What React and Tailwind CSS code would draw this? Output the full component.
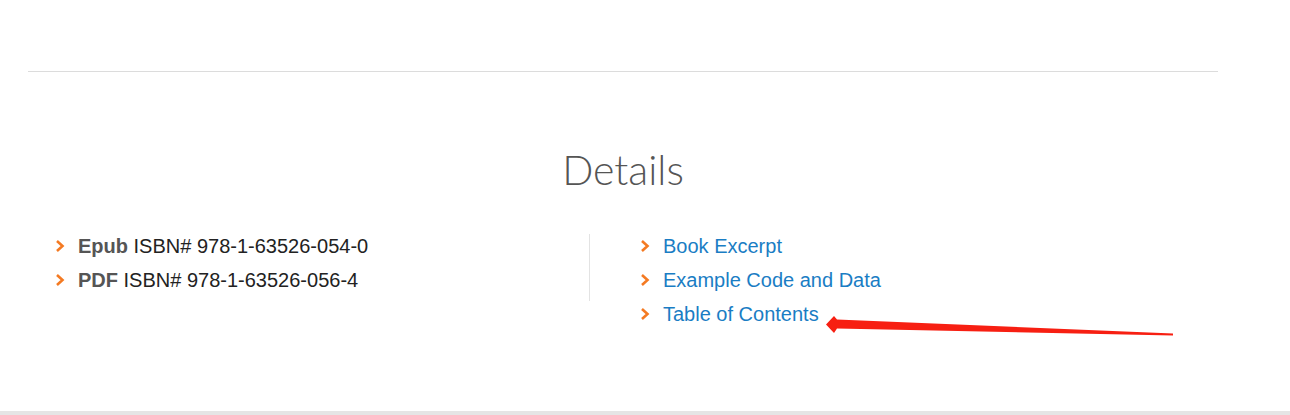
import React from "react";

const Chevron = () => (
  <svg viewBox="0 0 10 14" className="w-[10px] h-[14px] shrink-0">
    <polyline points="2,2 7.5,7 2,12" fill="none" stroke="#f47a22" strokeWidth="2.6" strokeLinejoin="miter" />
  </svg>
);

const isbns = [
  { tipo: "Epub", numero: "978-1-63526-054-0" },
  { tipo: "PDF", numero: "978-1-63526-056-4" },
];

const links = ["Book Excerpt", "Example Code and Data", "Table of Contents"];

export default function App() {
  return (
    <div className="relative h-[415px] w-full bg-white flex flex-col font-['Liberation_Sans',Arial,sans-serif]">
      <div className="mt-[71px] ml-[28px] w-[1190px] border-t border-[#dcdcdc]" />

      <h2 className="mt-[74px] ml-[28px] w-[1190px] text-center text-[41px] leading-[48px] font-light text-[#555] font-['Lato',sans-serif]">
        Details
      </h2>

      <div className="mt-[35px] ml-[28px] flex items-start">
        <ul className="w-[561px] pl-[27px]">
          {isbns.map((item) => (
            <li key={item.tipo} className="flex items-center h-[34px] text-[20px] text-[#222]">
              <Chevron />
              <span className="ml-[13px]">
                <strong className="font-bold text-[#555]">{item.tipo}</strong> ISBN# {item.numero}
              </span>
            </li>
          ))}
        </ul>
        <div className="mt-[5px] h-[67px] w-px bg-[#e3e3e3]" />
        <ul className="pl-[50px]">
          {links.map((label) => (
            <li key={label} className="flex items-center h-[34px] text-[20px]">
              <Chevron />
              <a href="#" className="ml-[13px] text-[#1a7dc4]">
                {label}
              </a>
            </li>
          ))}
        </ul>
      </div>

      <div className="mt-auto h-[4px] w-full bg-[#e5e5e5]" />

      <svg className="absolute left-0 top-0 pointer-events-none" width="1290" height="415">
        <polygon
          points="826,324.5 834,316 837,319.5 1173,333.5 1173,335.5 837,328.5 834,333"
          fill="#f71f12"
        />
      </svg>
    </div>
  );
}
